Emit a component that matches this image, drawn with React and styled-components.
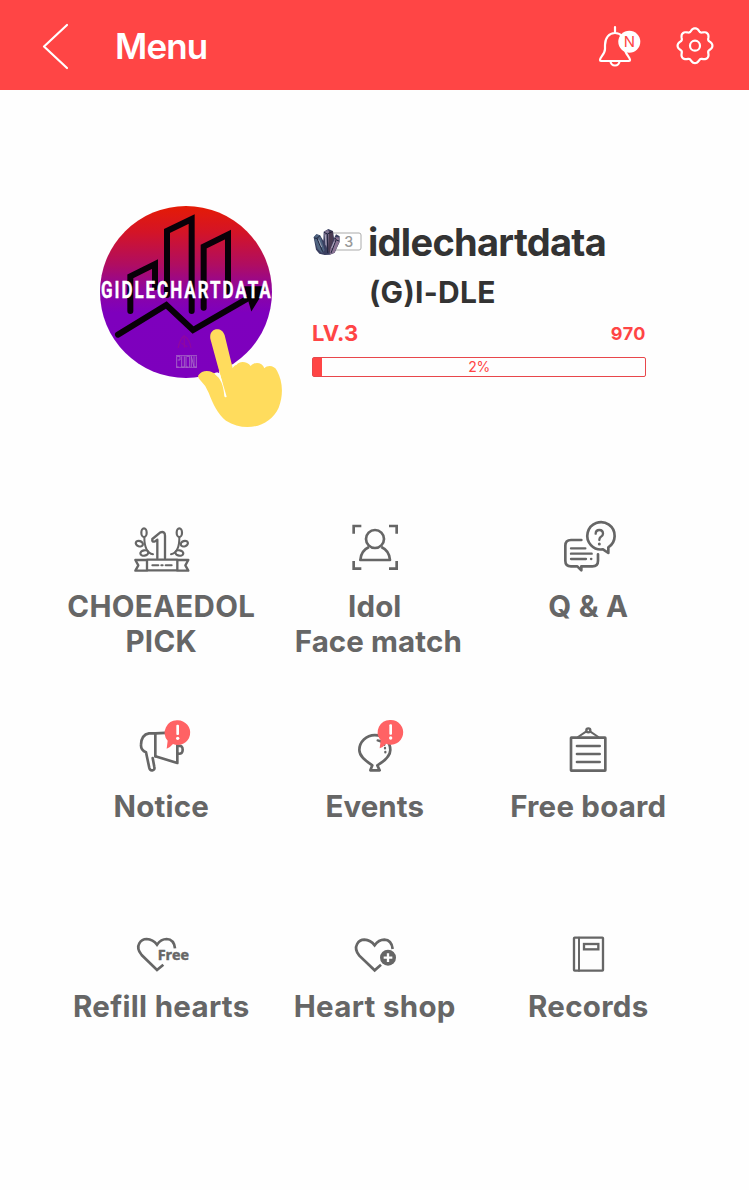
import React from 'react';
import styled, { createGlobalStyle } from "styled-components";

const GlobalStyle = createGlobalStyle`
    * {
        box-sizing:border-box;
    }
    body {
        margin:0;
        background:#fefefe;
        font-family:Inter, "Liberation Sans", sans-serif;
    }
`
const Page = styled.div`
    width:749px;
    height:1190px;
    overflow:hidden;
`
const Header = styled.header`
    display:flex;
    flex-direction: row;
    align-items: center;
    height:90px;
    padding:0 33px 0 40px;
    background:#ff4545;
`
const HeaderTitle = styled.h1`
    flex:1;
    margin:0 0 0 43px;
    padding-top:2px;
    font-size:35px;
    line-height:44px;
    font-weight:600;
    font-optical-sizing:none;
    letter-spacing:-0.9px;
    color:#fff;
`
const HeaderIcon = styled.svg`
    display:block;
    flex:none;
    width:${props => props.$width}px;
    height:50px;
    margin-left:${props => props.$gap || 0}px;
    fill:none;
    stroke:#fff;
    stroke-width:2.2;
    stroke-linejoin:round;
    stroke-linecap:round;
`
const Profile = styled.section`
    display:flex;
    flex-direction: row;
    padding:105px 103px 0 90px;
    height:417px;
`
const Avatar = styled.svg`
    display:block;
    flex:none;
    width:200px;
    height:240px;
    overflow:visible;
`
const Details = styled.div`
    flex:1;
    margin-left:22px;
    padding-top:24px;
`
const NameRow = styled.div`
    display:flex;
    flex-direction: row;
    align-items: center;
    height:46px;
`
const LevelBadge = styled.svg`
    display:block;
    flex:none;
    width:50px;
    height:30px;
    margin-right:6px;
`
const Name = styled.div`
    font-size:38px;
    line-height:46px;
    font-weight:700;
    letter-spacing:-0.7px;
    white-space:nowrap;
    color:#333;
`
const Group = styled.div`
    margin:9px 0 0 57px;
    font-size:30px;
    line-height:36px;
    font-weight:700;
    letter-spacing:0.3px;
    color:#333;
`
const LevelRow = styled.div`
    display:flex;
    flex-direction: row;
    align-items: center;
    justify-content: space-between;
    height:28px;
    margin-top:9px;
    font-weight:700;
    color:#ff4545;
`
const Level = styled.span`
    font-size:22px;
`
const Points = styled.span`
    font-size:18px;
    letter-spacing:0.5px;
`
const Progress = styled.div`
    display:flex;
    align-items: stretch;
    height:20px;
    margin-top:10px;
    border:1px solid #e8474b;
    border-radius:2px;
    color:#ff4545;
`
const ProgressFill = styled.div`
    flex:none;
    width:9px;
    margin-right:-9px;
    background:#ff4545;
`
const ProgressText = styled.div`
    flex:1;
    text-align:center;
    font-size:14px;
    line-height:18px;
    letter-spacing:-0.3px;
`
const MenuGrid = styled.nav`
    display:grid;
    grid-template-columns:repeat(3, 213.5px);
    grid-auto-rows:200px;
    margin-left:54.5px;
`
const MenuItem = styled.div`
    display:flex;
    flex-direction: column;
    align-items: center;
`
const MenuIcon = styled.svg`
    display:block;
    width:80px;
    height:80px;
    fill:none;
    stroke:#666;
    stroke-width:8;
    stroke-linejoin:round;
    stroke-linecap:${props => props.$cap || 'round'};
`
const Label = styled.div`
    margin-top:2px;
    font-size:29.5px;
    line-height:35px;
    font-weight:650;
    font-optical-sizing:none;
    letter-spacing:${props => props.$spacing || 0}px;
    white-space:pre;
    text-align:center;
    color:#666;
`

// eight round teeth, starting from the top one
const gearPoints = Array.from({ length: 128 }, (_, i) => {
    const angle = i * Math.PI / 64;
    const wave = Math.cos(8 * angle);
    const radius = 15.9 + 1.5 * wave + 0.3 * (1 - wave * wave);
    return `${(21 + radius * Math.sin(angle)).toFixed(2)},${(25.7 - radius * Math.cos(angle)).toFixed(2)}`;
}).join(' ');

function AlertBubble({x,y}) {
    return <g transform={`translate(${x} ${y})`} stroke="none">
        <path fill="#ff6264" d="M0 -37a37 37 0 1 1-14 71q-9 11-19 14l3-24A37 37 0 0 1 0-37z"/>
        <rect x="-4" y="-24" width="8" height="31" rx="3" fill="#fff"/>
        <circle cx="0" cy="17" r="5" fill="#fff"/>
    </g>;
}

function PickIcon() {
    return <MenuIcon viewBox="0 0 240 240">
        <g transform="translate(12 24)" strokeWidth="7">
            <path d="M97 130V74l-7 5q-10 3-8-7l24-20q14-4 14 10v68"/>
            <path d="M66 134h91v32H66zM66 135H31l9 16-9 16h35M157 135h33l-9 16 9 16h-33"/>
            <path d="M82 151h18M109 151h4M122 151h18" strokeWidth="6"/>
            <path d="M84 118Q58 113 58 66M138 118Q164 112 163 66" strokeWidth="6"/>
            <g fill="#fff" strokeWidth="6.5">
                <ellipse cx="57" cy="53" rx="8" ry="13"/>
                <ellipse cx="163" cy="53" rx="8" ry="13"/>
                <ellipse cx="43" cy="86" rx="11" ry="8" transform="rotate(18 43 86)"/>
                <ellipse cx="178" cy="86" rx="11" ry="8" transform="rotate(-18 178 86)"/>
                <ellipse cx="58" cy="114" rx="12" ry="8" transform="rotate(-8 58 114)"/>
                <ellipse cx="163" cy="114" rx="12" ry="8" transform="rotate(8 163 114)"/>
            </g>
        </g>
    </MenuIcon>;
}

function FaceIcon() {
    return <MenuIcon viewBox="0 0 240 240" $cap="butt">
        <g transform="translate(15 24)">
            <path d="M41 56V33h23M147 33h23v23M41 138v23h23M147 161h23v-23" strokeLinejoin="miter"/>
            <circle cx="105" cy="72" r="27"/>
            <path d="M87 96Q63 107 61 135h89q-2-28-26-39"/>
        </g>
    </MenuIcon>;
}

function QuestionIcon() {
    return <MenuIcon viewBox="0 0 240 240">
        <g transform="translate(20 26)">
            <path d="M80 73H49q-17 0-17 17v45q0 17 17 17h19l12 12v-12h33q17 0 17-17v-19"/>
            <path d="M49 98h43M49 114h62M49 130h45M109 130h1" strokeWidth="7"/>
            <path d="M161 95v17l-16-11a41 41 0 1 1 16-6z"/>
            <path d="M123 54q0-11 11-11t11 11q0 6-7 10-4 3-4 9" strokeWidth="7"/>
            <circle cx="134" cy="85" r="4.500" fill="#666" stroke="none"/>
        </g>
    </MenuIcon>;
}

function NoticeIcon() {
    return <MenuIcon viewBox="0 0 240 240">
        <g transform="translate(27 25)">
            <path d="M76 54H57Q34 58 33 88q-1 17 15 23l10 47q2 8 9 7 8-1 6-10l-5-27M76 54v69"/>
            <path d="M76 54l60-3M76 123l66 20V90"/>
            <path d="M145 92q13-3 13 11t-13 12"/>
            <AlertBubble x={143} y={52}/>
        </g>
    </MenuIcon>;
}

function EventsIcon() {
    return <MenuIcon viewBox="0 0 240 240">
        <g transform="translate(30 24)">
            <path d="M82 151C62 138 43 124 43 105a46 44 0 0 1 93 0q0 23-39 46l7 15H76l6-15z"/>
            <path d="M98 76q13 2 20 13M120 99v1M121 111v1" strokeWidth="7"/>
            <AlertBubble x={137} y={52}/>
        </g>
    </MenuIcon>;
}

function BoardIcon() {
    return <MenuIcon viewBox="0 0 240 240">
        <g transform="translate(36 24)">
            <rect x="33" y="68" width="103" height="99" rx="1"/>
            <path d="M51 93h68M51 117h68M51 141h68"/>
            <path d="M54 66l24-16M115 66L91 50" strokeWidth="6"/>
            <circle cx="85" cy="46" r="6" strokeWidth="7"/>
        </g>
    </MenuIcon>;
}

function RefillIcon() {
    return <MenuIcon viewBox="0 0 240 240" $cap="butt">
        <g transform="translate(28 69)">
            <path d="M99 104l-19 16-46-45C10 46 34 27 49 27q19 1 31 17Q92 27 109 27q22 1 25 28" strokeLinejoin="miter"/>
            <text x="82" y="90" fill="#666" stroke="#666" strokeWidth="1.5" fontFamily="Open Sans, sans-serif" fontSize="43" fontWeight="700" textLength="94" lengthAdjust="spacingAndGlyphs">Free</text>
        </g>
    </MenuIcon>;
}

function ShopIcon() {
    return <MenuIcon viewBox="0 0 240 240" $cap="butt">
        <g transform="translate(-614 69)">
            <path d="M752 104l-19 17-46-44c-23-29 0-48 15-48q19 1 31 17 12-17 29-17 22 1 25 28" strokeLinejoin="miter"/>
            <circle cx="773" cy="83" r="24" fill="#666" stroke="none"/>
            <path d="M773 70v26M760 83h26" stroke="#fff" strokeWidth="7"/>
        </g>
    </MenuIcon>;
}

function RecordsIcon() {
    return <MenuIcon viewBox="0 0 240 240">
        <g transform="translate(36 69)" strokeWidth="7">
            <rect x="42" y="23" width="87" height="99" rx="2"/>
            <path d="M57 23v99" strokeWidth="6"/>
            <rect x="72" y="42" width="43" height="16" strokeLinejoin="miter"/>
        </g>
    </MenuIcon>;
}

function ProfilePicture() {
    return <Avatar viewBox="0 0 600 720">
        <defs>
            <linearGradient id="sky" x1="0" y1="0" x2="0" y2="1">
                <stop offset="0" stopColor="#e51b05"/>
                <stop offset="0.15" stopColor="#d41426"/>
                <stop offset="0.34" stopColor="#b00d61"/>
                <stop offset="0.5" stopColor="#8c04a4"/>
                <stop offset="0.62" stopColor="#7e00bd"/>
                <stop offset="1" stopColor="#7d00bd"/>
            </linearGradient>
        </defs>
        <circle cx="288" cy="291" r="258" fill="url(#sky)"/>
        <g fill="none" stroke="#080008" strokeWidth="18">
            <path d="M121 348V244l74-37v70M231 300V108l74-36v276M341 338V155l73-36v170" strokeLinecap="round"/>
            <path d="M84 419l145-89 80 75 163-94" strokeLinecap="round"/>
            <path d="M470 280h50l-34 55z" fill="#080008" strokeWidth="12"/>
        </g>
        <text x="33" y="308" fill="#fff" stroke="#fff" strokeWidth="1" fontFamily="Roboto, sans-serif" fontSize="70" fontWeight="700" letterSpacing="8" textLength="515" lengthAdjust="spacingAndGlyphs">GIDLECHARTDATA</text>
        <path d="M264 459q7-29 19-37 17 13 20 37M283 427v31M274 444l18 12" fill="none" stroke="#a8107a" strokeWidth="4" opacity="0.4"/>
        <path d="M260 484v32h6M260 484h10v11h-7M275 484v32h8v-32M288 484v32h7M290 484h9v32M304 516v-32l8 32v-32M319 484v32h-6M258 482h63M258 517h63" fill="none" stroke="#aa70c9" strokeWidth="2.5"/>
        <path fill="#ffdc5d" d="M408 607Q403 565 384 543C363 523 337 523 325 541q-3 6 6 15 16 15 25 37c12 32 28 65 52 84 57 37 132 19 158-39 16-41 11-82-5-111-8-16-28-18-38-7-6-19-30-21-41-7-10-15-34-16-42-4-6 2-9 5-12 10L404 421c-8-28-48-23-43 10l47 173z"/>
        <path fill="#fefefe" d="M374 537l14-7 22 75q-4 4-7-1-2-26-9-42-7-16-20-25z"/>
        <path fill="#7d00bd" d="M365 532l7-4 12-7 4 14q-9-6-23-3z"/>
    </Avatar>;
}

function CrystalBadge() {
    return <LevelBadge viewBox="0 0 150 90">
        <rect x="55" y="18" width="92" height="51" rx="6" fill="#fff" stroke="#aaa" strokeWidth="3"/>
        <text x="97" y="59" fill="#999" fontSize="43" fontFamily="Inter, sans-serif" fontWeight="500">3</text>
        <path fill="#3a3f60" d="M5 31l8-9 11 3 10 16 1-27 14-8 14 6 3 22 6-12 11 6 0 17-15 32-14 6-16 1-16-4-10-12z"/>
        <path fill="#4f6480" d="M5 31l8-9 11 3 14 45-8 8-13-12z"/>
        <path fill="#7e7391" d="M36 14l12-6 5 9-4 55-8-18z"/>
        <path fill="#4a3b52" d="M51 12l11 1 2 23-12 44-4-14z"/>
        <path fill="#8b7494" d="M70 31l10 0 2 14-15 33-14 4 2-16z"/>
        <path fill="none" stroke="#20243d" strokeWidth="3" d="M6 33l9 1 9-8M15 34l17 40M36 16l10 5 15-7M46 21l1 57M69 33l4 6 8 3M72 39L57 78"/>
        <path fill="none" stroke="#aeb0c4" strokeWidth="2.5" d="M20 38l9 22M40 24l2 31M67 44l-8 19"/>
    </LevelBadge>;
}

const items = [
    { label: 'CHOEAEDOL\nPICK', icon: PickIcon, spacing: 0.3 },
    { label: 'Idol\n Face match', icon: FaceIcon, spacing: 0.1 },
    { label: 'Q & A', icon: QuestionIcon, spacing: 0.3 },
    { label: 'Notice', icon: NoticeIcon, spacing: 0.2 },
    { label: 'Events', icon: EventsIcon, spacing: 0.1 },
    { label: 'Free board', icon: BoardIcon, spacing: 0.2 },
    { label: 'Refill hearts', icon: RefillIcon, spacing: 0.3 },
    { label: 'Heart shop', icon: ShopIcon, spacing: 0.3 },
    { label: 'Records', icon: RecordsIcon, spacing: 0.3 },
];

function App() {

    return <>
      <GlobalStyle/>
      <Page>
         <Header>
            <HeaderIcon viewBox="0 0 32 50" $width={32}>
                <path d="M27 5L4 26.500 27 48"/>
            </HeaderIcon>
            <HeaderTitle>Menu</HeaderTitle>
            <HeaderIcon viewBox="0 0 46 50" $width={46}>
                <path d="M19 7v5.500M19 13c-6 0-10 5-10 12v4c0 5-5 8-5 11 0 .7.300 1 1 1h28c.7 0 1-.3 1-1 0-3-5-6-5-11v-4c0-7-4-12-10-12z"/>
                <path d="M14.500 41a4.500 4.500 0 0 0 9 0"/>
                <circle cx="33.300" cy="21.700" r="11" fill="#fff" stroke="none"/>
                <text x="33.300" y="27" fill="#ff4545" stroke="none" fontSize="15" textAnchor="middle">N</text>
            </HeaderIcon>
            <HeaderIcon viewBox="0 0 42 50" $width={42} $gap={32}>
                <circle cx="21" cy="25.700" r="5"/>
                <polygon points={gearPoints}/>
            </HeaderIcon>
         </Header>
         <Profile>
            <ProfilePicture/>
            <Details>
               <NameRow>
                  <CrystalBadge/>
                  <Name>idlechartdata</Name>
               </NameRow>
               <Group>(G)I-DLE</Group>
               <LevelRow>
                  <Level>LV.3</Level>
                  <Points>970</Points>
               </LevelRow>
               <Progress>
                  <ProgressFill/>
                  <ProgressText>2%</ProgressText>
               </Progress>
            </Details>
         </Profile>
         <MenuGrid>
            {items.map(({ label, icon: Icon, spacing }) => (
               <MenuItem key={label}>
                  <Icon/>
                  <Label $spacing={spacing}>{label}</Label>
               </MenuItem>
            ))}
         </MenuGrid>
      </Page>
    </>;
  }

  export default App;
